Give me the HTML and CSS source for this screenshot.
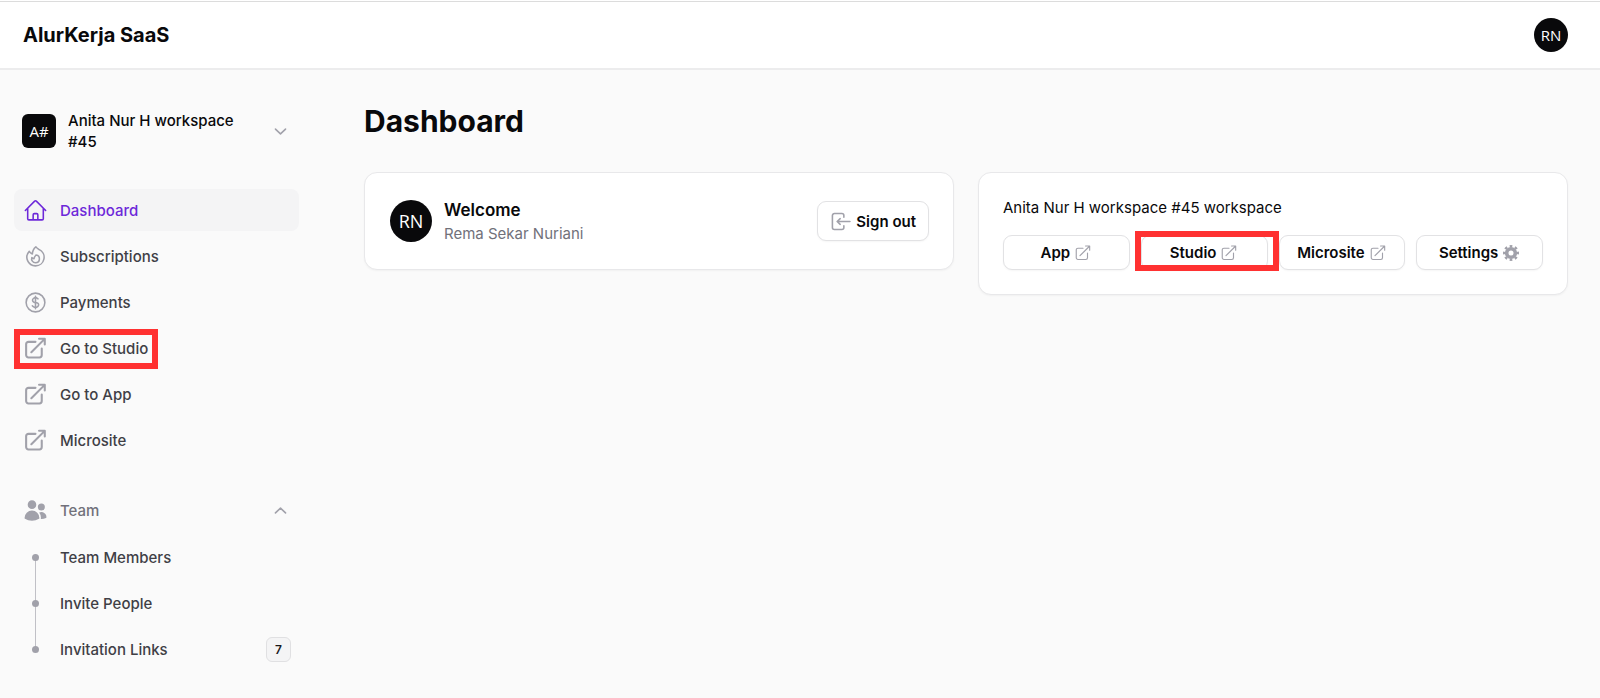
FILE: index.html
```
<!DOCTYPE html>
<html lang="en">
<head>
    <meta charset="UTF-8">
    <meta name="viewport" content="width=device-width, initial-scale=1.0">
    <title>Dashboard - AlurKerja SaaS</title>
    <link rel="stylesheet" href="styles.css">
</head>
<body>
    <!-- Shared icons -->
    <svg class="sprite" aria-hidden="true">
        <symbol id="external" viewBox="0 0 24 24">
            <path d="M12 5.6H5.25A2.25 2.25 0 0 0 3 7.85v10.5A2.25 2.25 0 0 0 5.25 20.6h10.5A2.25 2.25 0 0 0 18 18.35V12M8 15.6 20.6 3M15.4 2.7h5.5v5.5"/>
        </symbol>
        <symbol id="chevron-down" viewBox="0 0 20 20">
            <path d="M5.2 7.7 10 12.3 14.8 7.7"/>
        </symbol>
        <symbol id="chevron-up" viewBox="0 0 20 20">
            <path d="M5.2 12.3 10 7.7 14.8 12.3"/>
        </symbol>
    </svg>

    <header class="topbar">
        <a href="#" class="brand">AlurKerja SaaS</a>
        <button type="button" class="avatar avatar-small" aria-label="User menu">RN</button>
    </header>

    <div class="layout">
        <aside class="sidebar">
            <button type="button" class="workspace">
                <span class="workspace-avatar">A#</span>
                <span class="workspace-name">Anita Nur H workspace #45</span>
                <svg class="chevron"><use href="#chevron-down"/></svg>
            </button>

            <nav>
                <ul class="nav-list">
                    <li>
                        <a href="#" class="nav-item active">
                            <svg class="icon" viewBox="0 0 24 24"><path d="m2.25 12 8.954-8.955c.44-.439 1.152-.439 1.591 0L21.75 12M4.5 9.75v10.125c0 .621.504 1.125 1.125 1.125H9.75v-4.875c0-.621.504-1.125 1.125-1.125h2.25c.621 0 1.125.504 1.125 1.125V21h4.125c.621 0 1.125-.504 1.125-1.125V9.75M8.25 21h8.25"/></svg>
                            <span>Dashboard</span>
                        </a>
                    </li>
                    <li>
                        <a href="#" class="nav-item">
                            <svg class="icon" viewBox="0 0 24 24"><path d="M15.362 5.214A8.252 8.252 0 0 1 12 21 8.25 8.25 0 0 1 6.038 7.047 8.287 8.287 0 0 0 9 9.601a8.983 8.983 0 0 1 3.361-6.867 8.21 8.21 0 0 0 3 2.48Z"/><path d="M12 18a3.75 3.75 0 0 0 .495-7.468 5.99 5.99 0 0 0-1.925 3.547 5.975 5.975 0 0 1-2.133-1.001A3.75 3.75 0 0 0 12 18Z"/></svg>
                            <span>Subscriptions</span>
                        </a>
                    </li>
                    <li>
                        <a href="#" class="nav-item">
                            <svg class="icon" viewBox="0 0 24 24"><path d="M12 6v12m-3-2.818.879.659c1.171.879 3.07.879 4.242 0 1.172-.879 1.172-2.303 0-3.182C13.536 12.219 12.768 12 12 12c-.725 0-1.45-.22-2.003-.659-1.106-.879-1.106-2.303 0-3.182s2.9-.879 4.006 0l.415.33M21 12a9 9 0 1 1-18 0 9 9 0 0 1 18 0Z"/></svg>
                            <span>Payments</span>
                        </a>
                    </li>
                    <li class="marked">
                        <a href="#" class="nav-item">
                            <svg class="icon icon-bold"><use href="#external"/></svg>
                            <span>Go to Studio</span>
                        </a>
                    </li>
                    <li>
                        <a href="#" class="nav-item">
                            <svg class="icon icon-bold"><use href="#external"/></svg>
                            <span>Go to App</span>
                        </a>
                    </li>
                    <li>
                        <a href="#" class="nav-item">
                            <svg class="icon icon-bold"><use href="#external"/></svg>
                            <span>Microsite</span>
                        </a>
                    </li>
                </ul>

                <button type="button" class="nav-item group-title" aria-expanded="true">
                    <svg class="icon icon-solid" viewBox="0 0 24 24"><path d="M4.5 6.375a4.125 4.125 0 1 1 8.25 0 4.125 4.125 0 0 1-8.25 0ZM14.25 8.625a3.375 3.375 0 1 1 6.75 0 3.375 3.375 0 0 1-6.75 0ZM1.5 19.125a7.125 7.125 0 0 1 14.25 0v.003l-.001.119a.75.75 0 0 1-.363.63 13.067 13.067 0 0 1-6.761 1.873c-2.472 0-4.786-.684-6.76-1.873a.75.75 0 0 1-.364-.63l-.001-.122ZM17.25 19.128l-.001.144a2.25 2.25 0 0 1-.233.96 10.088 10.088 0 0 0 5.06-1.01.75.75 0 0 0 .42-.643 4.875 4.875 0 0 0-6.957-4.611 8.586 8.586 0 0 1 1.71 5.157v.003Z"/></svg>
                    <span>Team</span>
                    <svg class="chevron"><use href="#chevron-up"/></svg>
                </button>
                <ul class="nav-list team-list">
                    <li>
                        <a href="#" class="nav-item"><span class="dot"></span><span>Team Members</span></a>
                    </li>
                    <li>
                        <a href="#" class="nav-item"><span class="dot"></span><span>Invite People</span></a>
                    </li>
                    <li>
                        <a href="#" class="nav-item"><span class="dot"></span><span>Invitation Links</span><span class="badge">7</span></a>
                    </li>
                </ul>
            </nav>
        </aside>

        <main class="content">
            <h1>Dashboard</h1>

            <div class="cards">
                <section class="card welcome">
                    <span class="avatar">RN</span>
                    <div class="welcome-text">
                        <h2>Welcome</h2>
                        <p>Rema Sekar Nuriani</p>
                    </div>
                    <button type="button" class="btn sign-out">
                        <svg class="btn-icon" viewBox="0 0 20 20"><path d="M13.2 6V4.3A1.9 1.9 0 0 0 11.3 2.4H4.2A1.9 1.9 0 0 0 2.3 4.3v11.4a1.9 1.9 0 0 0 1.9 1.9h7.1a1.9 1.9 0 0 0 1.9-1.9V14M19 10H7.2M9.7 7.3 6.8 10l2.9 2.7"/></svg>
                        Sign out
                    </button>
                </section>

                <section class="card">
                    <p class="card-title">Anita Nur H workspace #45 workspace</p>
                    <div class="actions">
                        <a href="#" class="btn">App <svg class="link-icon"><use href="#external"/></svg></a>
                        <div class="marked">
                            <a href="#" class="btn">Studio <svg class="link-icon"><use href="#external"/></svg></a>
                        </div>
                        <a href="#" class="btn">Microsite <svg class="link-icon"><use href="#external"/></svg></a>
                        <a href="#" class="btn">Settings
                            <svg class="link-icon gear" viewBox="0 0 20 20">
                                <circle cx="10" cy="10" r="4.8" stroke-width="4"/>
                                <circle cx="10" cy="10" r="7.6" stroke-width="2.6" pathLength="16" stroke-dasharray="1 1" stroke-dashoffset="0.5"/>
                            </svg>
                        </a>
                    </div>
                </section>
            </div>
        </main>
    </div>
</body>
</html>
```
FILE: styles.css
```
* {
    box-sizing: border-box;
}

body {
    margin: 0;
    border-top: 1px solid white;
    background-color: #fafafa;
    color: #09090b;
    font-family: Inter, "Liberation Sans", sans-serif;
    font-size: 15px;
    line-height: 21px;
}

h1, h2, p, ul {
    margin: 0;
    padding: 0;
}

ul {
    list-style: none;
}

a {
    color: inherit;
    text-decoration: none;
}

button {
    font: inherit;
    color: inherit;
    background: none;
    border: 0;
    padding: 0;
    cursor: pointer;
}

svg {
    flex-shrink: 0;
    fill: none;
    stroke: #a1a1aa;
    stroke-width: 1.5;
    stroke-linecap: round;
    stroke-linejoin: round;
}

.sprite {
    display: none;
}

/* Top bar */
.topbar {
    display: flex;
    align-items: center;
    justify-content: space-between;
    height: 69px;
    padding: 0 32px 0 23px;
    background-color: white;
    border-top: 1px solid #dcdcdc;
    border-bottom: 2px solid #ececed;
}

.brand {
    font-size: 20px;
    font-weight: 700;
}

.avatar {
    display: flex;
    align-items: center;
    justify-content: center;
    flex-shrink: 0;
    width: 42px;
    height: 42px;
    border-radius: 50%;
    background-color: #09090b;
    color: white;
    font-family: "Open Sans", sans-serif;
    font-size: 18px;
}

.avatar-small {
    width: 34px;
    height: 34px;
    font-size: 15px;
}

.layout {
    display: flex;
}

/* Sidebar */
.sidebar {
    width: 332px;
    flex-shrink: 0;
    padding: 40px 33px 20px 14px;
}

.workspace {
    display: flex;
    align-items: center;
    gap: 12px;
    width: 100%;
    margin-bottom: 37px;
    padding: 0 8px;
    text-align: left;
    font-weight: 500;
}

.workspace-avatar {
    display: flex;
    align-items: center;
    justify-content: center;
    flex-shrink: 0;
    width: 34px;
    height: 34px;
    border-radius: 6px;
    background-color: #09090b;
    color: white;
    font-family: "Open Sans", sans-serif;
    font-weight: 400;
    font-size: 15px;
}

.workspace-name {
    flex: 1;
    padding-right: 12px;
}

.chevron {
    width: 21px;
    height: 21px;
    margin-left: auto;
}

.nav-list {
    display: flex;
    flex-direction: column;
    gap: 4px;
}

.nav-item {
    display: flex;
    align-items: center;
    gap: 12px;
    width: 100%;
    height: 42px;
    padding: 0 8px 0 9px;
    border-radius: 8px;
    color: #3f3f46;
    font-weight: 500;
}

.nav-item.active {
    background-color: #f4f4f5;
    color: #6d28d9;
}

.nav-item.active .icon {
    stroke: #6d28d9;
}

.icon {
    width: 25px;
    height: 25px;
}

.icon-bold {
    stroke-width: 2;
}

.icon-solid {
    fill: #a1a1aa;
    stroke: none;
}

.group-title {
    margin: 28px 0 5px;
    color: #71717a;
}

/* Dots joined by a vertical line */
.dot {
    position: relative;
    display: flex;
    align-items: center;
    justify-content: center;
    width: 25px;
    height: 42px;
}

.dot::after {
    content: "";
    width: 7px;
    height: 7px;
    border-radius: 50%;
    background-color: #a1a1aa;
    z-index: 1;
}

.team-list li:not(:last-child) .dot::before {
    content: "";
    position: absolute;
    top: 21px;
    left: 12px;
    width: 1px;
    height: 46px;
    background-color: #c0c0c6;
}

.badge {
    min-width: 25px;
    margin-left: auto;
    border: 1px solid #e0e0e2;
    border-radius: 6px;
    background-color: #f4f4f5;
    color: #18181b;
    font-size: 12px;
    line-height: 23px;
    text-align: center;
    font-weight: 600;
}

/* Content */
.content {
    flex: 1;
    padding: 32px;
}

h1 {
    margin-bottom: 32px;
    font-size: 30px;
    line-height: 38px;
    font-weight: 700;
}

.cards {
    display: grid;
    grid-template-columns: 1fr 1fr;
    align-items: start;
    gap: 24px;
}

.card {
    padding: 24px;
    border: 1px solid #e8e8ea;
    border-radius: 13px;
    background-color: white;
    box-shadow: 0 1px 2px rgba(0, 0, 0, 0.04);
}

.welcome {
    display: flex;
    align-items: center;
    gap: 12px;
    padding-left: 25px;
}

.welcome-text {
    flex: 1;
}

.welcome-text h2 {
    font-size: 17px;
    line-height: 26px;
    font-weight: 600;
}

.welcome-text p {
    color: #71717a;
    line-height: 22px;
}

.card-title {
    margin-bottom: 16px;
    line-height: 22px;
}

.actions {
    display: grid;
    grid-template-columns: repeat(4, 1fr);
    gap: 11px;
}

.btn {
    display: flex;
    align-items: center;
    justify-content: center;
    gap: 4px;
    height: 35px;
    border: 1px solid #e2e2e4;
    border-radius: 9px;
    background-color: white;
    box-shadow: 0 1px 2px rgba(0, 0, 0, 0.04);
    font-weight: 600;
}

.sign-out {
    gap: 5px;
    height: 40px;
    padding: 0 12px;
}

.btn-icon {
    width: 21px;
    height: 21px;
}

.link-icon {
    width: 18px;
    height: 18px;
}

.gear {
    stroke-linecap: butt;
}

/* Highlight frame around a link */
.marked {
    position: relative;
}

.marked::after {
    content: "";
    position: absolute;
    top: -4px;
    left: -6px;
    width: 144px;
    height: 40px;
    box-sizing: border-box;
    border: 6px solid #ff3131;
    pointer-events: none;
}

.nav-list .marked::after {
    top: 2px;
    left: 0;
}
```
